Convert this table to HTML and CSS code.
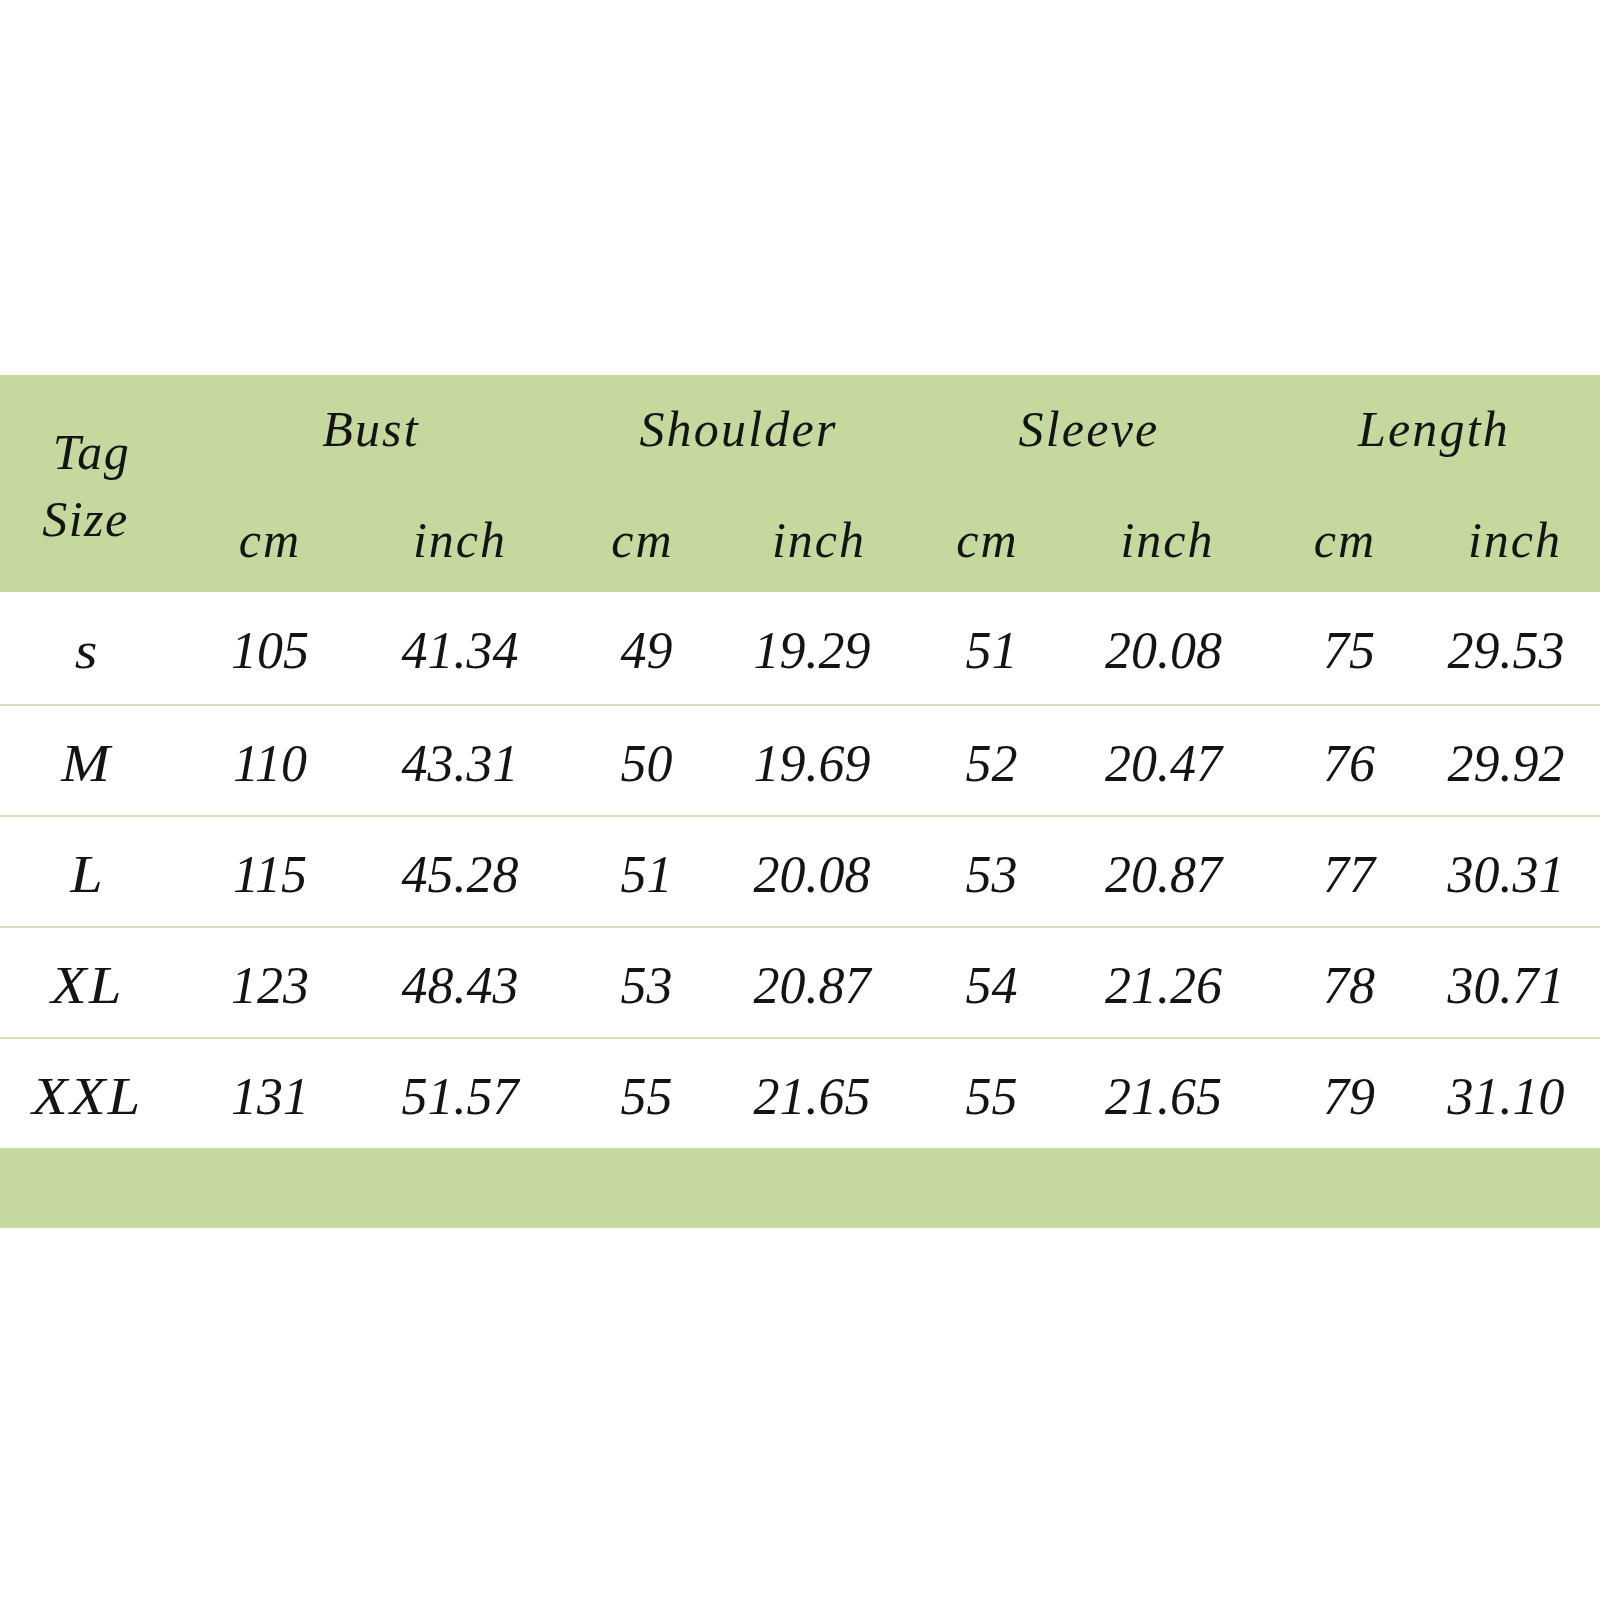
FILE: index.html
```html
<!DOCTYPE html>
<html>
<head>
<meta charset="utf-8">
<link rel="stylesheet" href="styles.css">
</head>
<body>
<div class="page">
  <div class="table">
    <div class="head grid">
      <div class="tag"><span class="tag-1">Tag</span><span class="tag-2">Size</span></div>
      <div class="group g1">Bust</div>
      <div class="group g2">Shoulder</div>
      <div class="group g3">Sleeve</div>
      <div class="group g4">Length</div>
      <div class="sub">cm</div><div class="sub">inch</div>
      <div class="sub">cm</div><div class="sub sub-shift">inch</div>
      <div class="sub">cm</div><div class="sub">inch</div>
      <div class="sub">cm</div><div class="sub">inch</div>
    </div>
    <div class="row grid first">
      <div class="cell size"><span>s</span></div><div class="cell">105</div><div class="cell">41.34</div><div class="cell">49</div><div class="cell">19.29</div><div class="cell">51</div><div class="cell">20.08</div><div class="cell">75</div><div class="cell">29.53</div>
    </div>
    <div class="row grid">
      <div class="cell size"><span>M</span></div><div class="cell">110</div><div class="cell">43.31</div><div class="cell">50</div><div class="cell">19.69</div><div class="cell">52</div><div class="cell">20.47</div><div class="cell">76</div><div class="cell">29.92</div>
    </div>
    <div class="row grid">
      <div class="cell size"><span>L</span></div><div class="cell">115</div><div class="cell">45.28</div><div class="cell">51</div><div class="cell">20.08</div><div class="cell">53</div><div class="cell">20.87</div><div class="cell">77</div><div class="cell">30.31</div>
    </div>
    <div class="row grid">
      <div class="cell size"><span>XL</span></div><div class="cell">123</div><div class="cell">48.43</div><div class="cell">53</div><div class="cell">20.87</div><div class="cell">54</div><div class="cell">21.26</div><div class="cell">78</div><div class="cell">30.71</div>
    </div>
    <div class="row grid">
      <div class="cell size"><span>XXL</span></div><div class="cell">131</div><div class="cell">51.57</div><div class="cell">55</div><div class="cell">21.65</div><div class="cell">55</div><div class="cell">21.65</div><div class="cell">79</div><div class="cell">31.10</div>
    </div>
    <div class="foot"></div>
  </div>
</div>
</body>
</html>
```

FILE: styles.css
```css
html, body {
  margin: 0;
  padding: 0;
  background: #ffffff;
}

.page {
  width: 1600px;
  height: 1600px;
  padding-top: 375px;
  box-sizing: border-box;
  font-family: "Liberation Serif", "Times New Roman", serif;
  font-style: italic;
  color: #141414;
}

.grid {
  display: grid;
  grid-template-columns: 175px 190px 190px 175px 170px 175px 185px 170px 170px;
}

.head {
  background: #c5d89d;
  height: 217px;
  grid-template-rows: 108px 109px;
  font-size: 50px;
  letter-spacing: 1.5px;
}

.tag {
  grid-row: 1 / span 2;
  grid-column: 1;
  display: flex;
  flex-direction: column;
  justify-content: center;
  align-items: center;
  line-height: 67px;
  padding-top: 4px;
}

.tag-1 {
  margin-left: 8px;
}

.tag-2 {
  margin-right: 4px;
}

.group {
  grid-column: span 2;
  grid-row: 1;
  display: flex;
  align-items: center;
  justify-content: center;
  letter-spacing: 2.2px;
}

.g1 { padding-left: 12px; }
.g2 { padding-left: 22px; }
.g3 { padding-left: 18px; }
.g4 { padding-left: 8px; }

.sub {
  grid-row: 2;
  display: flex;
  align-items: center;
  justify-content: center;
  padding-top: 4px;
  letter-spacing: 2px;
}

.sub-shift { padding-left: 8px; }

.row {
  height: 109px;
  border-top: 2px solid #d3e1b6;
  font-size: 52px;
}

.row.first {
  height: 112px;
  border-top: none;
}

.cell {
  display: flex;
  align-items: center;
  justify-content: center;
  padding-top: 5px;
}

.cell:nth-child(4) { padding-left: 8px; }
.cell:nth-child(5) { padding-right: 6px; }
.cell:nth-child(6) { padding-left: 8px; }
.cell:nth-child(7) { padding-right: 8px; }
.cell:nth-child(8) { padding-left: 8px; }
.cell:nth-child(9) { padding-right: 18px; }

.size {
  padding-right: 1px;
}

.size span {
  display: inline-block;
  letter-spacing: 2px;
  transform: scaleX(1.12);
}

.foot {
  height: 80px;
  background: #c5d89d;
}
```
